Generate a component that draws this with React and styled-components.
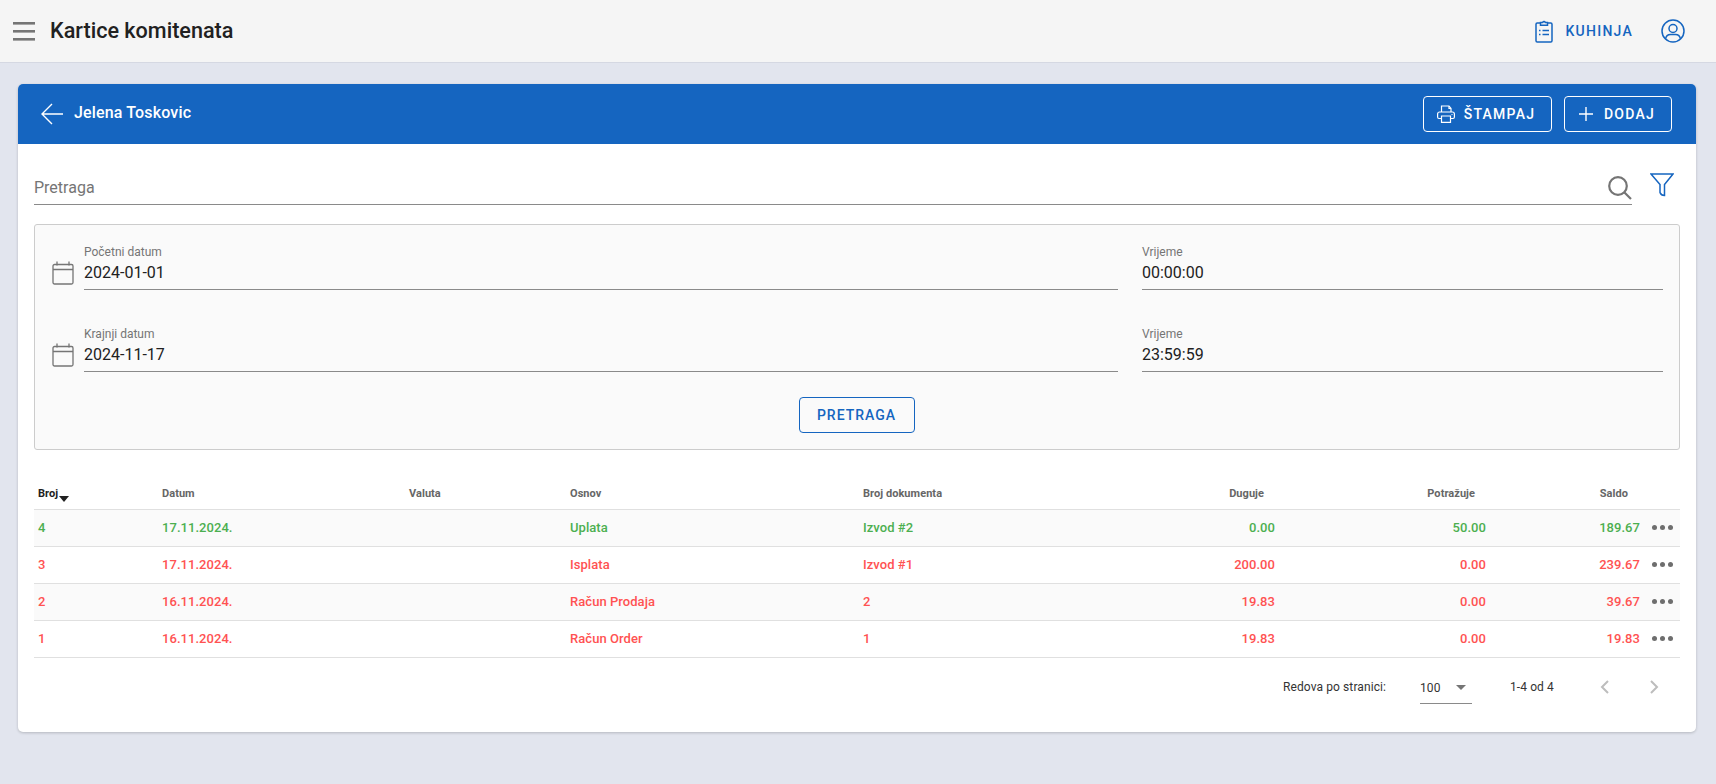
import * as React from "react"
import styled, { createGlobalStyle } from "styled-components"

const GlobalStyle = createGlobalStyle`
  html, body {
    margin: 0;
    padding: 0;
    height: 100%;
    background: #e2e5ee;
    font-family: Roboto, "Liberation Sans", sans-serif;
  }
  * {
    box-sizing: border-box;
  }
`

const TopBar = styled.header`
  height: 63px;
  display: flex;
  align-items: center;
  padding: 0 31px 1px 13px;
  background: #f5f5f5;
  border-bottom: 1px solid #d5d8e2;
`

const MenuIcon = styled.svg`
  width: 22px;
  height: 20px;
  margin-right: 15px;
  color: #757575;
`

const Title = styled.h1`
  flex: 1;
  margin: 0;
  font-size: 21.6px;
  font-weight: 500;
  color: #212121;
`

const KitchenLink = styled.div`
  display: flex;
  align-items: center;
  gap: 13px;
  margin-right: 28px;
  color: #1565c0;
  font-size: 14px;
  font-weight: 500;
  letter-spacing: 1.25px;
`

const BlueIcon = styled.svg`
  color: #1565c0;
  display: block;
`

const FilterIcon = styled(BlueIcon)`
  margin-top: 3px;
`

const Card = styled.main`
  margin: 21px 20px 0 18px;
  height: 648px;
  background: #fff;
  border-radius: 5px;
  box-shadow: 0 1px 3px rgba(0, 0, 0, 0.2);
  overflow: hidden;
`

const CardHeader = styled.div`
  height: 60px;
  display: flex;
  align-items: center;
  padding: 0 24px 0 23px;
  background: #1565c0;
  color: #fff;
`

const BackIcon = styled.svg`
  width: 22px;
  height: 22px;
  margin-right: 11px;
`

const CardTitle = styled.div`
  flex: 1;
  font-size: 16px;
  font-weight: 500;
  letter-spacing: 0.15px;
  padding-bottom: 4px;
`

const HeaderButton = styled.button`
  height: 36px;
  width: ${(p) => p.$width}px;
  margin-left: 12px;
  padding: 0 3px 0 0;
  display: flex;
  align-items: center;
  justify-content: center;
  gap: ${(p) => p.$gap}px;
  background: transparent;
  color: #fff;
  border: 1px solid #fff;
  border-radius: 4px;
  font-family: inherit;
  font-size: 14px;
  font-weight: 500;
  letter-spacing: 1.25px;
`

const CardBody = styled.div`
  padding: 26px 16px 0;
`

const SearchRow = styled.div`
  display: flex;
  align-items: flex-start;
  gap: 18px;
  padding-right: 6px;
  margin-bottom: 19px;
`

const SearchField = styled.div`
  flex: 1;
  height: 35px;
  display: flex;
  align-items: center;
  justify-content: space-between;
  border-bottom: 1px solid #8a8a8a;
  font-size: 16px;
  color: #757575;
`

const SearchIcon = styled.svg`
  color: #757575;
  display: block;
  flex: none;
  margin-top: 2px;
`

const CalendarSvg = styled.svg`
  color: #757575;
  display: block;
  flex: none;
  margin-bottom: 5px;
`

const FilterPanel = styled.section`
  height: 226px;
  padding: 20px 16px 15px 17px;
  background: #fafafa;
  border: 1px solid #ccc;
  border-radius: 3px;
`

const FieldGrid = styled.div`
  display: grid;
  grid-template-columns: 1066px 1fr;
  column-gap: 24px;
  row-gap: 37px;
`

const DateCell = styled.div`
  display: flex;
  align-items: flex-end;
  gap: 10px;
`

const Field = styled.div`
  flex: 1;
  height: 45px;
  border-bottom: 1px solid #8a8a8a;
`

const FieldLabel = styled.div`
  font-size: 12px;
  line-height: 14px;
  color: #757575;
`

const FieldValue = styled.div`
  margin-top: 3px;
  font-size: 16px;
  line-height: 22px;
  color: #212121;
`

const PanelAction = styled.div`
  display: flex;
  justify-content: center;
  margin-top: 25px;
  padding-right: 2px;
`

const OutlineButton = styled.button`
  width: 116px;
  height: 36px;
  padding: 0;
  background: transparent;
  color: #1565c0;
  border: 1px solid #1565c0;
  border-radius: 4px;
  font-family: inherit;
  font-size: 14px;
  font-weight: 500;
  letter-spacing: 1px;
`

const gridColumns = "124px 247px 161px 293px 241px 179px 211px 154px 36px"

const HeadRow = styled.div`
  margin-top: 20px;
  height: 40px;
  padding-top: 8px;
  display: grid;
  grid-template-columns: ${gridColumns};
  align-items: center;
  border-bottom: 1px solid #e0e0e0;
`

const HeadCell = styled.div`
  padding: 0 ${(p) => p.$end ?? 4}px 0 4px;
  font-size: 11px;
  font-weight: 700;
  letter-spacing: 0.05px;
  color: ${(p) => (p.$active ? "#212121" : "#666")};
  text-align: ${(p) => (p.$end ? "right" : "left")};
  position: relative;
`

const SortCaret = styled.span`
  position: absolute;
  left: 25px;
  top: 9px;
  border-left: 5px solid transparent;
  border-right: 5px solid transparent;
  border-top: 6px solid #212121;
`

const Row = styled.div`
  height: 37px;
  padding-bottom: 2px;
  display: grid;
  grid-template-columns: ${gridColumns};
  align-items: center;
  border-bottom: 1px solid #e0e0e0;
  background: ${(p) => (p.$striped ? "#fafafa" : "#fff")};
  color: ${(p) => (p.$positive ? "#4caf50" : "#ff5252")};
  font-size: 13px;
  font-weight: 500;
  letter-spacing: 0.05px;
`

const Cell = styled.div`
  padding: 0 4px;
  white-space: nowrap;
  text-align: ${(p) => (p.$right ? "right" : "left")};
`

const Dots = styled.div`
  display: flex;
  gap: 3px;
  padding-left: 8px;
`

const Dot = styled.span`
  width: 5px;
  height: 5px;
  border-radius: 50%;
  background: #6e6e6e;
`

const Pagination = styled.div`
  height: 58px;
  display: flex;
  align-items: center;
  font-size: 12px;
  letter-spacing: 0.1px;
  color: #333;
`

const PagerLabel = styled.div`
  margin-left: 1249px;
  width: 137px;
`

const PagerSelect = styled.div`
  width: 52px;
  height: 32px;
  padding-top: 1px;
  display: flex;
  align-items: center;
  justify-content: space-between;
  padding-right: 6px;
  border-bottom: 1px solid #8a8a8a;
  margin-top: 1px;
`

const SelectCaret = styled.span`
  border-left: 5px solid transparent;
  border-right: 5px solid transparent;
  border-top: 5px solid #757575;
`

const PagerRange = styled.div`
  margin-left: 38px;
  width: 89px;
`

const PagerArrows = styled.div`
  display: flex;
  gap: 37px;
  color: #bdbdbd;
`

const rows = [
  ["4", "17.11.2024.", "Uplata", "Izvod #2", "0.00", "50.00", "189.67", true],
  ["3", "17.11.2024.", "Isplata", "Izvod #1", "200.00", "0.00", "239.67", false],
  ["2", "16.11.2024.", "Račun Prodaja", "2", "19.83", "0.00", "39.67", false],
  ["1", "16.11.2024.", "Račun Order", "1", "19.83", "0.00", "19.83", false],
]

function CalendarIcon() {
  return (
    <CalendarSvg width="22" height="24" viewBox="0 0 22 24" fill="none" stroke="currentColor" strokeWidth="1.3">
      <rect x="1" y="3.500" width="20" height="19.500" rx="1.500" />
      <path d="M1 8.500h20M5 0.500v4M17 0.500v4" />
    </CalendarSvg>
  )
}

function DateField({ label, value, time }) {
  return (
    <>
      <DateCell>
        <CalendarIcon />
        <Field>
          <FieldLabel>{label}</FieldLabel>
          <FieldValue>{value}</FieldValue>
        </Field>
      </DateCell>
      <Field>
        <FieldLabel>Vrijeme</FieldLabel>
        <FieldValue>{time}</FieldValue>
      </Field>
    </>
  )
}

export default function App() {
  return (
    <>
      <GlobalStyle />
      <TopBar>
        <MenuIcon viewBox="0 0 22 20" fill="currentColor">
          <rect x="0" y="1" width="22" height="2.600" />
          <rect x="0" y="9" width="22" height="2.600" />
          <rect x="0" y="17" width="22" height="2.600" />
        </MenuIcon>
        <Title>Kartice komitenata</Title>
        <KitchenLink>
          <BlueIcon width="18" height="24" viewBox="0 0 18 24" fill="none" stroke="currentColor" strokeWidth="1.5">
            <path d="M5.500 4H2.200C1.500 4 1 4.500 1 5.200v16.600c0 .7.5 1.200 1.200 1.200h13.600c.7 0 1.200-.5 1.200-1.200V5.200C17 4.500 16.500 4 15.800 4h-3.300" />
            <path d="M5.500 6.200V3.500h2.200a1.400 1.400 0 0 1 2.600 0h2.200v2.700z" />
            <path d="M7.500 11.500H14M7.500 15.500H14" />
            <path d="M4 11.500h1.500M4 15.500h1.500" />
          </BlueIcon>
          KUHINJA
        </KitchenLink>
        <BlueIcon width="24" height="24" viewBox="0 0 24 24" fill="none" stroke="currentColor" strokeWidth="1.5">
          <circle cx="12" cy="12" r="11" />
          <circle cx="12" cy="9.500" r="4" />
          <path d="M4.500 20c.5-3 2.500-4.500 5-4.500h5c2.500 0 4.500 1.500 5 4.500" />
        </BlueIcon>
      </TopBar>
      <Card>
        <CardHeader>
          <BackIcon viewBox="0 0 22 22" fill="none" stroke="currentColor" strokeWidth="1.4">
            <path d="M22 11H1M11 1 1 11l10 10" />
          </BackIcon>
          <CardTitle>Jelena Toskovic</CardTitle>
          <HeaderButton $width={129} $gap={9}>
            <svg width="18" height="18" viewBox="0 0 18 18" fill="none" stroke="currentColor" strokeWidth="1.200">
              <path d="M4.500 7V1h7.500l2 2.500V7" />
              <path d="M12 1v2.500h2" />
              <path d="M4.500 13.500H2C1 13.500.6 13 .6 12V9C.6 7.800 1.400 7 2.600 7h12.800c1.200 0 2 .8 2 2v3c0 1-.4 1.500-1.400 1.500h-2.500" />
              <path d="M4.500 11h9v6.400h-9z" />
              <path d="M14.500 9.500h1" />
            </svg>
            ŠTAMPAJ
          </HeaderButton>
          <HeaderButton $width={108} $gap={10}>
            <svg width="16" height="16" viewBox="0 0 16 16" fill="none" stroke="currentColor" strokeWidth="1.400">
              <path d="M8 1v14M1 8h14" />
            </svg>
            DODAJ
          </HeaderButton>
        </CardHeader>
        <CardBody>
          <SearchRow>
            <SearchField>
              Pretraga
              <SearchIcon width="24" height="24" viewBox="0 0 24 24" fill="none" stroke="currentColor" strokeWidth="2.200">
                <circle cx="10" cy="10" r="8.800" />
                <path d="m16.500 16.500 6.500 6.500" />
              </SearchIcon>
            </SearchField>
            <FilterIcon width="24" height="24" viewBox="0 0 24 24" fill="none" stroke="currentColor" strokeWidth="1.500">
              <path d="M1 1h22l-8.500 10.500V22.500c-2 0-4-1.500-4.500-3v-8z" />
            </FilterIcon>
          </SearchRow>
          <FilterPanel>
            <FieldGrid>
              <DateField label="Početni datum" value="2024-01-01" time="00:00:00" />
              <DateField label="Krajnji datum" value="2024-11-17" time="23:59:59" />
            </FieldGrid>
            <PanelAction>
              <OutlineButton>PRETRAGA</OutlineButton>
            </PanelAction>
          </FilterPanel>
          <HeadRow>
            <HeadCell $active>
              Broj
              <SortCaret />
            </HeadCell>
            <HeadCell>Datum</HeadCell>
            <HeadCell>Valuta</HeadCell>
            <HeadCell>Osnov</HeadCell>
            <HeadCell>Broj dokumenta</HeadCell>
            <HeadCell $end={15}>Duguje</HeadCell>
            <HeadCell $end={15}>Potražuje</HeadCell>
            <HeadCell $end={16}>Saldo</HeadCell>
            <HeadCell />
          </HeadRow>
          {rows.map(([num, date, basis, doc, debit, credit, balance, positive], i) => (
            <Row key={num} $striped={i % 2 === 0} $positive={positive}>
              <Cell>{num}</Cell>
              <Cell>{date}</Cell>
              <Cell />
              <Cell>{basis}</Cell>
              <Cell>{doc}</Cell>
              <Cell $right>{debit}</Cell>
              <Cell $right>{credit}</Cell>
              <Cell $right>{balance}</Cell>
              <Dots>
                <Dot />
                <Dot />
                <Dot />
              </Dots>
            </Row>
          ))}
          <Pagination>
            <PagerLabel>Redova po stranici:</PagerLabel>
            <PagerSelect>
              100
              <SelectCaret />
            </PagerSelect>
            <PagerRange>1-4 od 4</PagerRange>
            <PagerArrows>
              <svg width="12" height="14" viewBox="0 0 12 14" fill="none" stroke="currentColor" strokeWidth="2">
                <path d="M9 1 3 7l6 6" />
              </svg>
              <svg width="12" height="14" viewBox="0 0 12 14" fill="none" stroke="currentColor" strokeWidth="2">
                <path d="m3 1 6 6-6 6" />
              </svg>
            </PagerArrows>
          </Pagination>
        </CardBody>
      </Card>
    </>
  )
}
